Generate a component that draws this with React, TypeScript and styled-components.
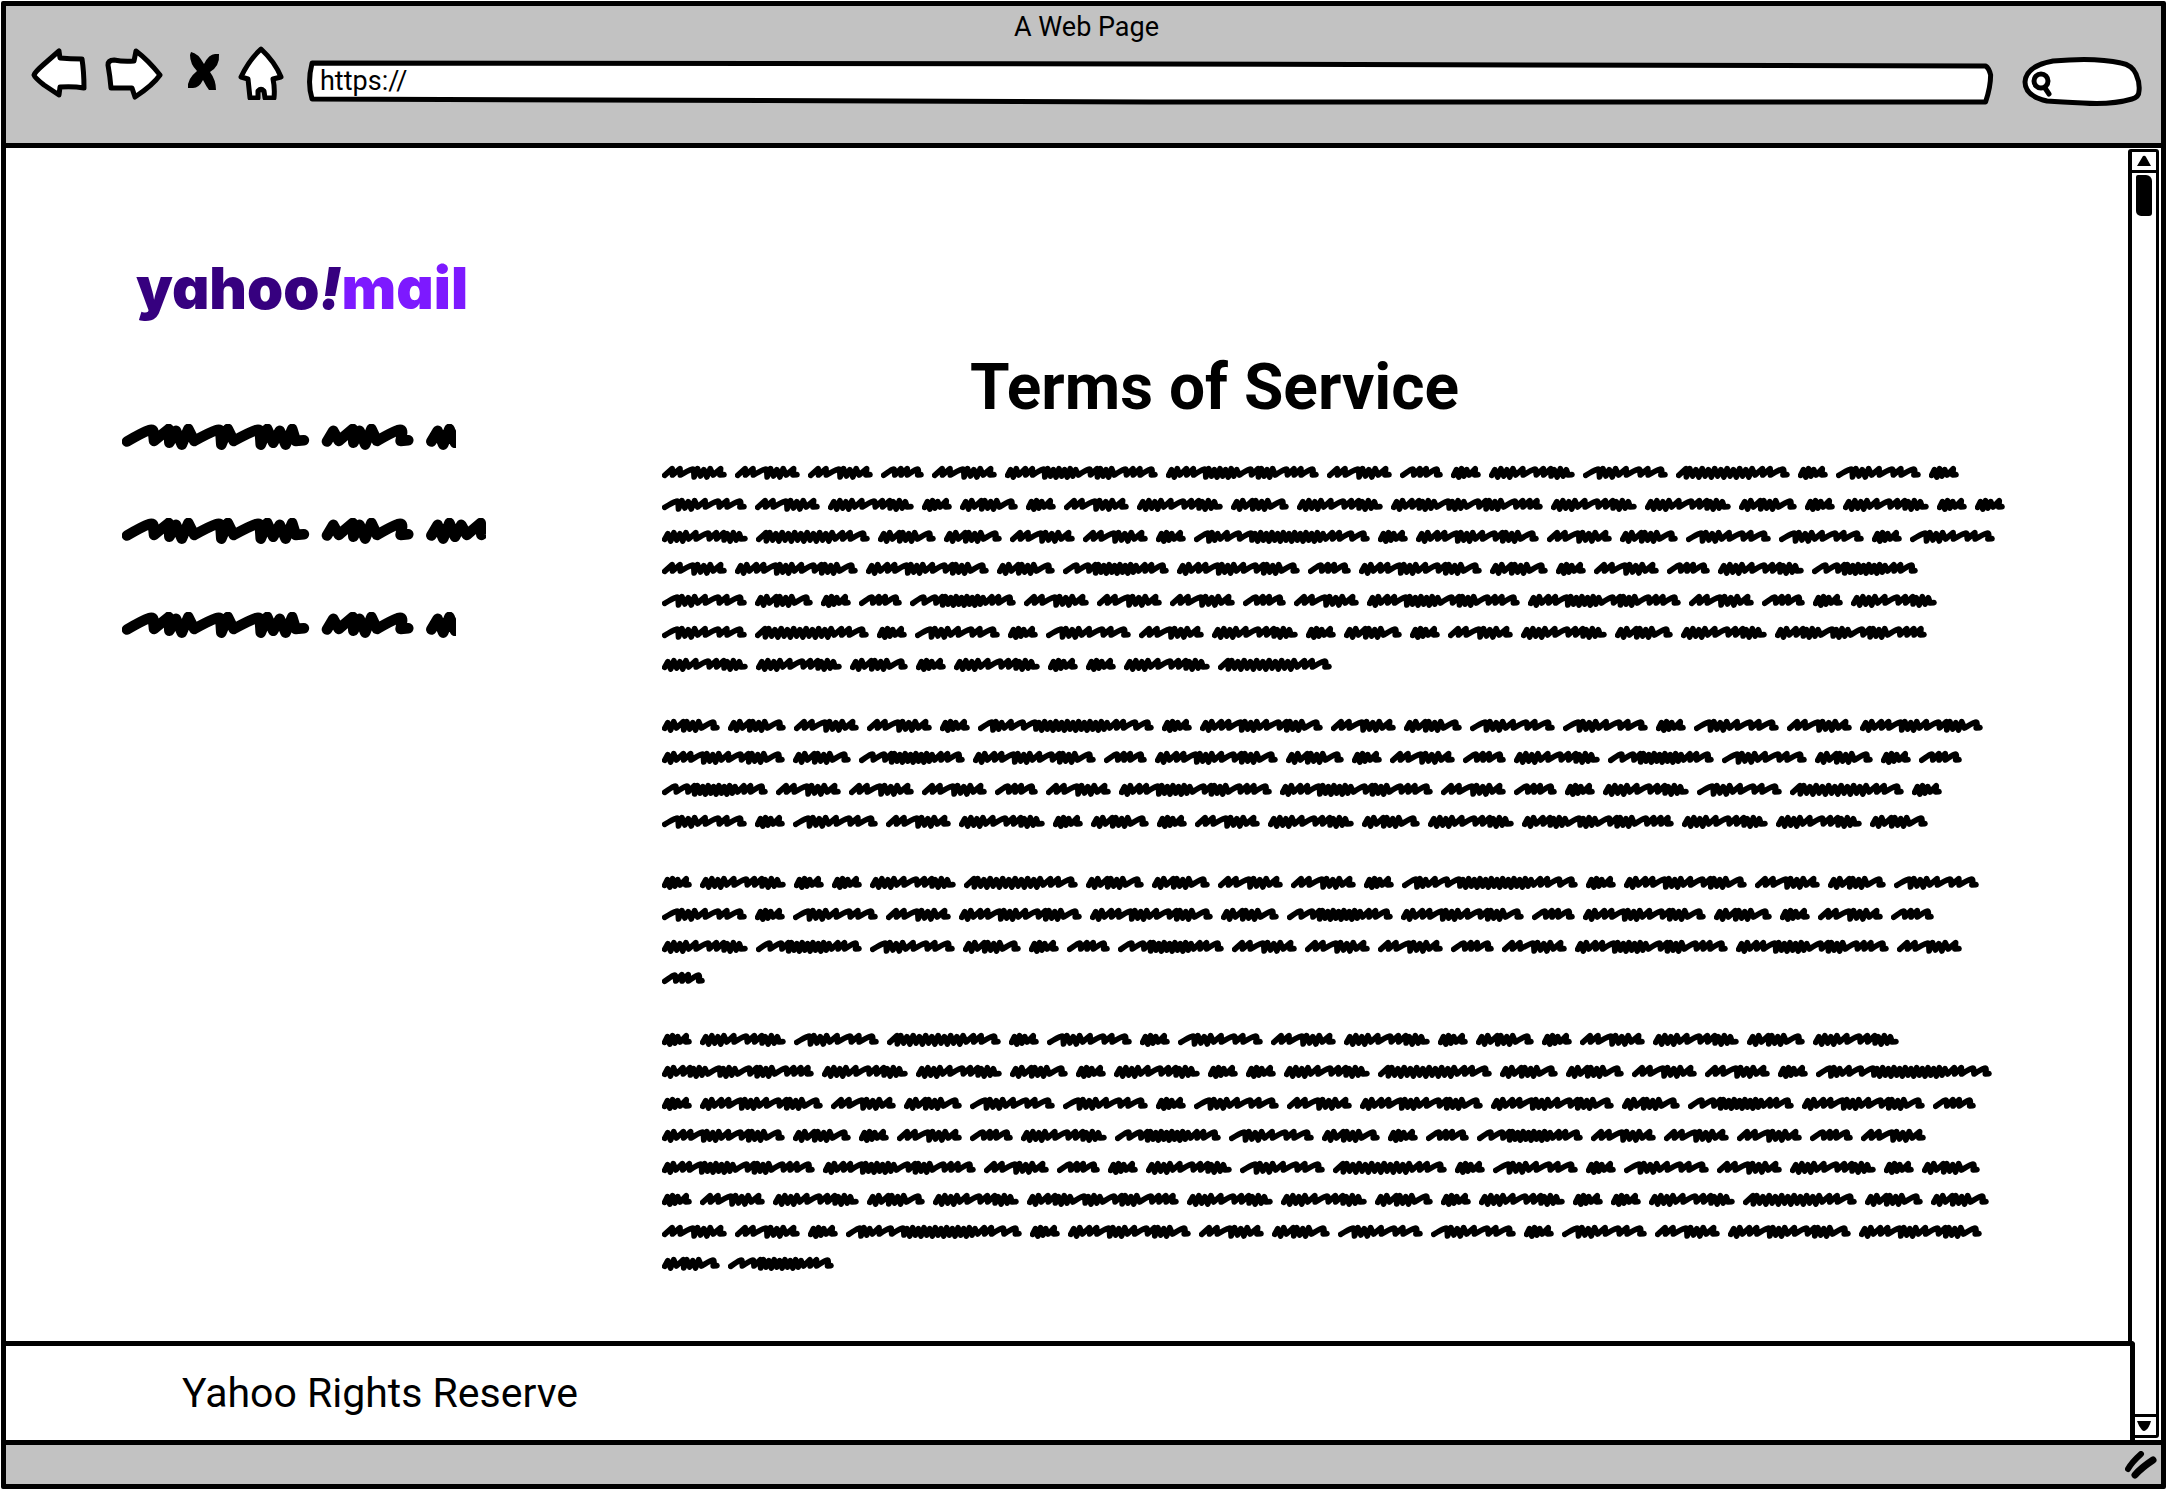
import React from "react";
import styled, { createGlobalStyle } from "styled-components";

const INK = "#000";
const CHROME = "#c2c2c2";

const GlobalStyle = createGlobalStyle`
  *, *::before, *::after { box-sizing: border-box; }
  body { margin: 0; background: #fff; color: ${INK}; font-family: Roboto, "Liberation Sans", sans-serif; }
  button { padding: 0; border: 0; background: none; color: inherit; cursor: pointer; }
  svg { display: block; }
`;

/* ---------- scribbled placeholder words ---------- */

/* s = slim stroke, n = wide hump, d = dense low stroke */
const STEP: Record<string, number> = { s: 21, n: 37, d: 17 };

function scribblePath(strokes: string, ink: number) {
  const total = [...strokes].reduce((sum, t) => sum + STEP[t], 8);
  const k = (ink - 16) / total;
  const px = (x: number) => (8 + x * k).toFixed(1);
  let x = 0;
  let d = "";
  [...strokes].forEach((t, i) => {
    const low = t === "d" ? (i % 2 ? 60 : 57) : 54;
    d += `${i ? "L" : "M"}${px(x)} ${i ? low : 55}`;
    if (t === "n") {
      d += `Q${px(x + 22)} 40 ${px(x + 30)} 37Q${px(x + 37)} 34 ${px(x + 36)} 42`;
    } else if (t === "s") {
      d += `L${px(x + 20)} 35`;
    } else {
      d += `L${px(x + 9)} ${i % 2 ? 35 : 38}`;
    }
    x += STEP[t];
  });
  return `${d}L${px(x - 3)} 54L${px(x + 8)} 53`;
}

/* advance width in pixels and stroke pattern of every word shape */
const WORDS: Record<string, [number, string]> = {
  A: [73, "ssnddds"],
  B: [161, "ddssnddddddnsdddnssn"],
  D: [51, "nssn"],
  E: [93, "ndddsnsn"],
  F: [94, "ddddsnssddd"],
  G: [38, "ddds"],
  H: [66, "ddsdddn"],
  I: [122, "sdddddddddddssn"],
  J: [184, "nddsnndddddddddddddssnn"],
  K: [131, "ddssndddsnsdddn"],
  L: [114, "nnsddddddddssn"],
  M: [160, "ddssdddndddnsdddnsss"],
};

/* the word shapes repeat in one fixed cycle that runs through all paragraphs */
const CYCLE =
  "AAADABBADGFEIGEGEAFGHGAFHFMFFHGFGGFIHHAAGJGKAHEEGEAKKHLKDKHGADFLEHGDL";

const LENGTHS = [105, 63, 48, 115];

function splitParagraphs() {
  let at = 0;
  return LENGTHS.map((count) => {
    const words = Array.from({ length: count }, (_, i) => CYCLE[(at + i) % CYCLE.length]);
    at += count;
    return words;
  });
}

const Word = ({ kind }: { kind: string }) => {
  const [advance, strokes] = WORDS[kind];
  return (
    <svg width={advance} height={32} viewBox={`0 0 ${advance * 3} 96`} aria-hidden="true">
      <path
        d={scribblePath(strokes, advance * 3 - 25)}
        fill="none"
        stroke={INK}
        strokeWidth={17}
        strokeLinecap="round"
        strokeLinejoin="round"
      />
    </svg>
  );
};

const LinkScribble = ({ width }: { width: number }) => (
  <svg width={width} height={26} viewBox={`0 27 ${width * 1.6} 41.6`} aria-hidden="true">
    <g fill="none" stroke={INK} strokeWidth={17} strokeLinecap="round" strokeLinejoin="round">
      <path d={scribblePath("nsddndnddd", 299)} />
      <path transform="translate(320 0)" d={scribblePath("dsddn", 146)} />
      <path transform="translate(487 0)" d={scribblePath("dddsn", 146)} />
    </g>
  </svg>
);

/* ---------- layout ---------- */

const Frame = styled.div`
  display: flex;
  flex-direction: column;
  min-height: calc(100vh - 4px);
  margin: 1px 2px 3px 1px;
  border: 5px solid ${INK};
  border-radius: 2px;
  background: #fff;
`;

const Toolbar = styled.header`
  background: ${CHROME};
  border-bottom: 5px solid ${INK};
  padding: 0 19px 37px 25px;
`;

const WindowTitle = styled.div`
  font-size: 27px;
  line-height: 42px;
  text-align: center;
`;

const ToolRow = styled.div`
  display: flex;
  align-items: flex-end;
  height: 58px;
`;

const NavButtons = styled.div`
  display: flex;
  gap: 18px;
  padding-bottom: 6px;
  margin-right: 23px;
`;

const Sketch = styled.svg`
  position: absolute;
  inset: 0;
  width: 100%;
  height: 100%;
  overflow: visible;
`;

const Field = styled.label<{ $grow?: boolean; $width?: number }>`
  position: relative;
  display: block;
  flex: ${(p) => (p.$grow ? "1 1 0" : "none")};
  width: ${(p) => (p.$width ? `${p.$width}px` : "auto")};
  height: ${(p) => (p.$grow ? 44 : 48)}px;
  margin: 0 ${(p) => (p.$grow ? 29 : 0)}px 1px 0;
`;

const FieldInput = styled.input<{ $inset: number }>`
  position: relative;
  width: 100%;
  height: 40px;
  border: 0;
  outline: 0;
  padding: 0 12px 0 ${(p) => p.$inset}px;
  background: transparent;
  color: ${INK};
  font: 27px/40px Roboto, "Liberation Sans", sans-serif;
`;

const Viewport = styled.div`
  display: flex;
  flex: 1;
`;

const PageColumn = styled.div`
  display: flex;
  flex: 1;
  flex-direction: column;
  min-width: 0;
`;

const Page = styled.main`
  display: flex;
  flex: 1;
`;

const Sidebar = styled.aside`
  flex: none;
  width: 656px;
  padding: 104px 0 0 116px;
`;

const Logo = styled.div`
  padding-left: 14px;
  font-family: Inter, Lato, sans-serif;
  font-size: 58px;
  font-weight: 900;
  line-height: 72px;
  font-feature-settings: "cv11", "ss03";
  color: #36007f;
  white-space: nowrap;
`;

const Bang = styled.span`
  font-style: italic;
`;

const MailWord = styled.span`
  color: #7d19ff;
`;

const LinkList = styled.nav`
  display: flex;
  flex-direction: column;
  align-items: flex-start;
  gap: 68px;
  padding-top: 100px;
`;

const Article = styled.article`
  flex: 1 1 0;
  max-width: 1354px;
  padding-top: 204px;
`;

const Heading = styled.h1`
  margin: 0 0 33px;
  padding-left: 308px;
  font-size: 64px;
  font-weight: 700;
  line-height: 72px;
`;

const Copy = styled.div`
  display: flex;
  flex-direction: column;
  gap: 29px;
`;

const Paragraph = styled.p`
  display: flex;
  flex-wrap: wrap;
  margin: 0;
`;

const Footer = styled.footer`
  position: relative;
  display: flex;
  align-items: center;
  height: 99px;
  margin-right: -7px;
  padding-left: 176px;
  border-top: 5px solid ${INK};
  border-right: 5px solid ${INK};
  border-radius: 0 4px 0 0;
  background: #fff;
  font-size: 41px;
  line-height: 48px;
`;

const Scrollbar = styled.div`
  display: flex;
  flex: none;
  flex-direction: column;
  width: 31px;
  margin: 1px 2px 2px 0;
  border: 3px solid ${INK};
  border-left-width: 4px;
  border-radius: 3px;
`;

const ArrowButton = styled.button<{ $end?: boolean }>`
  display: flex;
  align-items: center;
  justify-content: center;
  height: 21px;
  border-style: solid;
  border-color: ${INK};
  border-width: ${(p) => (p.$end ? "3px 0 0" : "0 0 3px")};
`;

const Track = styled.div`
  flex: 1;
  padding: 2px 4px;
`;

const Thumb = styled.div`
  width: 16px;
  height: 41px;
  border-radius: 2px 6px 3px 5px;
  background: ${INK};
`;

const StatusBar = styled.div`
  display: flex;
  align-items: center;
  justify-content: flex-end;
  height: 44px;
  padding-right: 4px;
  border-top: 5px solid ${INK};
  background: ${CHROME};
`;

const outline = {
  fill: "#fff",
  stroke: INK,
  strokeWidth: 5,
  strokeLinejoin: "round" as const,
  strokeLinecap: "round" as const,
};

export default function App() {
  return (
    <>
      <GlobalStyle />
      <Frame>
        <Toolbar>
          <WindowTitle>A Web Page</WindowTitle>
          <ToolRow>
            <NavButtons>
              <button aria-label="Back">
                <svg width="56" height="54" viewBox="31 46 56 54">
                  <path {...outline} d="M34 75Q35 72 43 65L59 51L60 58Q70 59 82 59Q84 72 84 88Q73 86 60 87L59 95L44 85Q35 78 34 75Z" />
                </svg>
              </button>
              <button aria-label="Forward">
                <svg width="58" height="54" viewBox="105 46 58 54">
                  <path {...outline} d="M108 65Q108 60 114 60Q124 62 134 61L136 51Q148 60 160 75Q153 85 135 97L132 88H111Q110 76 108 65Z" />
                </svg>
              </button>
              <button aria-label="Stop">
                <svg width="39" height="54" viewBox="181 46 39 54">
                  <path fill={INK} d="M191 52Q198 53 204 64Q209 54 215 54H219Q220 66 210 72Q216 80 216 90H209Q206 86 203 80Q199 88 193 88H188Q187 79 197 71Q190 64 190 55Z" />
                </svg>
              </button>
              <button aria-label="Home">
                <svg width="46" height="54" viewBox="237 46 46 54">
                  <path {...outline} d="M260 49Q274 62 280 77L272 79Q274 88 273 98H264L263 91Q260 88 257 91V98H249L247 79L240 77Q248 60 260 49Z" />
                </svg>
              </button>
            </NavButtons>
            <Field $grow>
              <Sketch viewBox="0 0 1000 44" preserveAspectRatio="none" aria-hidden="true">
                <path {...outline} vectorEffect="non-scaling-stroke" d="M3 2L500 3L995 5Q997 7 998 14Q998 26 995 41L500 41L3 38Q0 22 3 2Z" />
              </Sketch>
              <FieldInput $inset={13} aria-label="Address" defaultValue="https://" />
            </Field>
            <Field $width={119}>
              <Sketch viewBox="0 0 119 48" preserveAspectRatio="none" aria-hidden="true">
                <path {...outline} d="M24 44Q2 39 2 25Q3 9 30 4Q72 0 98 6Q109 8 113 17Q117 26 116 34Q116 40 109 42Q88 48 60 46Q38 45 24 44Z" />
                <circle cx="18" cy="24" r="7" fill="#fff" stroke={INK} strokeWidth="5" />
                <path d="M22 31L26 37" stroke={INK} strokeWidth="5" strokeLinecap="round" />
              </Sketch>
              <FieldInput $inset={32} type="search" aria-label="Search" />
            </Field>
          </ToolRow>
        </Toolbar>

        <Viewport>
          <PageColumn>
            <Page>
              <Sidebar>
                <Logo>
                  yahoo<Bang>!</Bang>
                  <MailWord>mail</MailWord>
                </Logo>
                <LinkList>
                  <LinkScribble width={334} />
                  <LinkScribble width={364} />
                  <LinkScribble width={334} />
                </LinkList>
              </Sidebar>
              <Article>
                <Heading>Terms of Service</Heading>
                <Copy>
                  {splitParagraphs().map((words, i) => (
                    <Paragraph key={i}>
                      {words.map((kind, j) => (
                        <Word key={j} kind={kind} />
                      ))}
                    </Paragraph>
                  ))}
                </Copy>
              </Article>
            </Page>
            <Footer>Yahoo Rights Reserve</Footer>
          </PageColumn>
          <Scrollbar>
            <ArrowButton aria-label="Scroll up">
              <svg width="14" height="12" viewBox="0 0 14 12">
                <path d="M0 11L6 1Q8 0 9 2L14 11Z" fill={INK} />
              </svg>
            </ArrowButton>
            <Track>
              <Thumb />
            </Track>
            <ArrowButton $end aria-label="Scroll down">
              <svg width="14" height="12" viewBox="0 0 14 12">
                <path d="M0 1H14Q12 8 9 10Q7 12 5 10Q2 7 0 1Z" fill={INK} />
              </svg>
            </ArrowButton>
          </Scrollbar>
        </Viewport>

        <StatusBar>
          <svg width="32" height="28" viewBox="0 0 32 28" aria-hidden="true">
            <path d="M3 18Q7 11 16 3" fill="none" stroke={INK} strokeWidth="6" strokeLinecap="round" />
            <path d="M10 24Q16 17 28 9" fill="none" stroke={INK} strokeWidth="7" strokeLinecap="round" />
          </svg>
        </StatusBar>
      </Frame>
    </>
  );
}
